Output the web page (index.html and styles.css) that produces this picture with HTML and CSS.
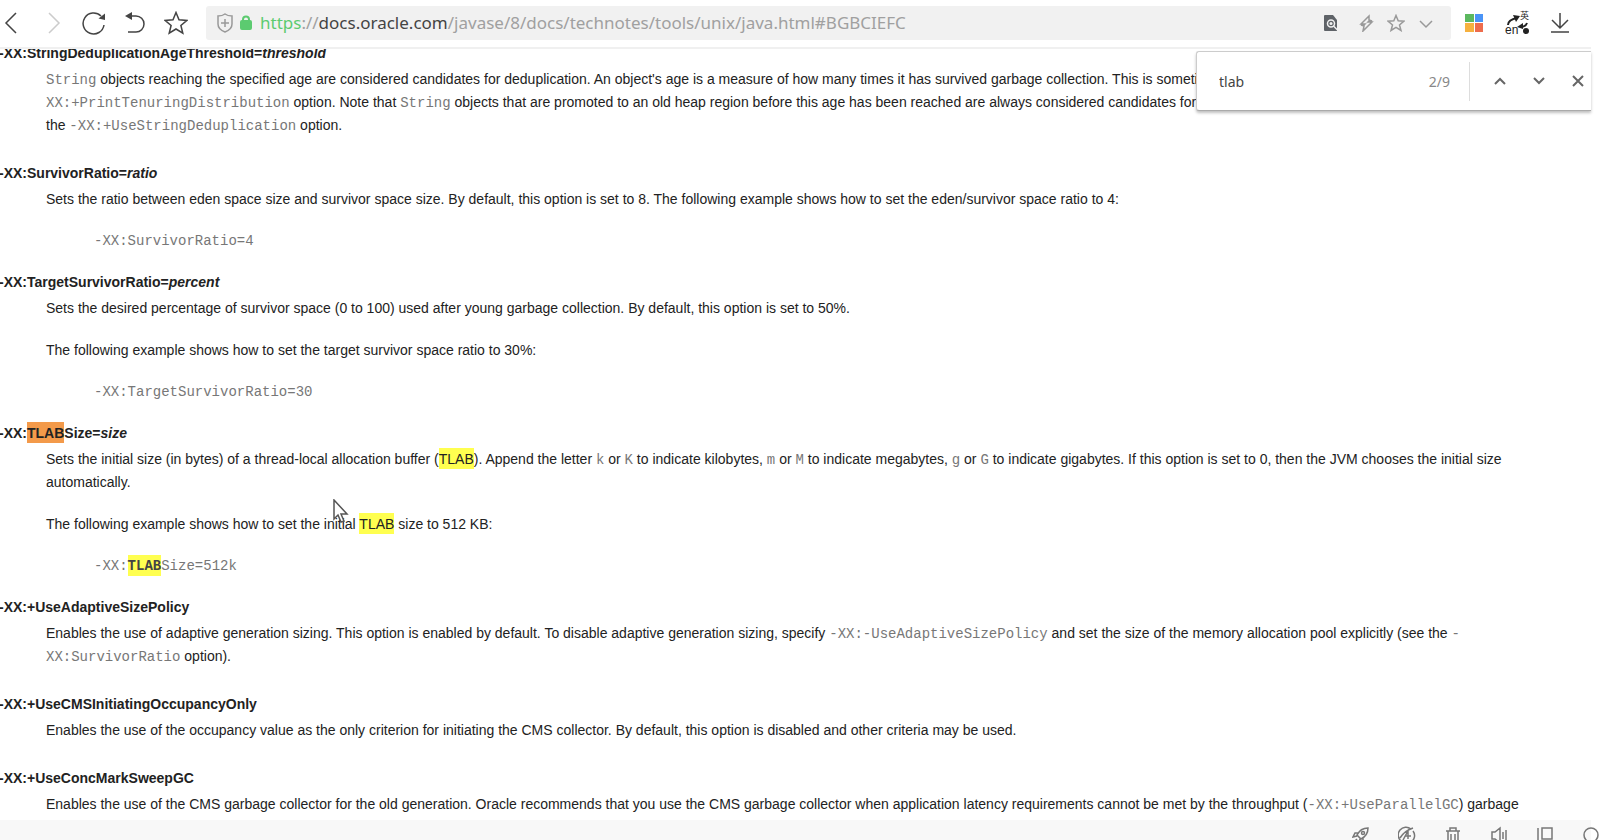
FILE: index.html
```html
<!DOCTYPE html>
<html lang="en">
<head>
    <meta charset="UTF-8">
    <meta name="viewport" content="width=device-width, initial-scale=1.0">
    <title>java</title>
    <link rel="stylesheet" href="styles.css">
</head>
<body>
    <header class="toolbar">
        <nav class="nav-buttons">
            <button type="button" aria-label="Back">
                <svg width="24" height="24" viewBox="0 0 24 24"><path d="M16 2 6 12l10 10"/></svg>
            </button>
            <button type="button" aria-label="Forward" class="faded">
                <svg width="24" height="24" viewBox="0 0 24 24"><path d="m8 2 10 10L8 22"/></svg>
            </button>
            <button type="button" aria-label="Reload">
                <svg width="24" height="24" viewBox="0 0 24 24"><path d="M22 14A10.500 10.500 0 1 1 19 5"/><path class="solid" d="m16.500 7.500 6.500-5V9z"/></svg>
            </button>
            <button type="button" aria-label="Undo close tab">
                <svg width="24" height="24" viewBox="0 0 24 24"><path d="M5 5h8a8 8 0 0 1 0 16H5"/><path class="solid" d="M2 5 9 1v8z"/></svg>
            </button>
            <button type="button" aria-label="Favorites">
                <svg width="24" height="24" viewBox="0 0 24 24"><path d="m12 1.500 3 7.300 8 .6-6.100 5.100 1.900 7.700-6.800-4.200-6.800 4.200 1.900-7.700L1 9.400l8-.6z"/></svg>
            </button>
        </nav>
        <div class="address-bar">
            <svg class="shield" width="16" height="20" viewBox="0 0 16 20"><path d="M8 1c2 1.500 4.500 2 7 2v8c0 4-3 6.500-7 8-4-1.500-7-4-7-8V3c2.500 0 5-.5 7-2zM8 6v8M4 10h8"/></svg>
            <svg class="lock" width="12" height="16" viewBox="0 0 12 16"><rect x="1" y="6" width="10" height="8" rx="1"/><path d="M3 7V4.500a3 3 0 0 1 6 0V7"/></svg>
            <a class="url" href="#BGBCIEFC"><span class="scheme">https</span>://<span class="host">docs.oracle.com</span>/javase/8/docs/technotes/tools/unix/java.html#BGBCIEFC</a>
            <div class="address-tools">
                <button type="button" aria-label="Find in page">
                    <svg width="18" height="18" viewBox="0 0 18 18"><path class="page-fill" d="M4 1h8l4 5v11H4a1 1 0 0 1-1-1V2a1 1 0 0 1 1-1z"/><circle cx="10" cy="9.500" r="3.500" class="lens"/><path class="lens" d="m12.500 12 4 4"/><circle cx="10" cy="9.500" r="1.500" class="lens-dot"/></svg>
                </button>
                <button type="button" aria-label="Speed mode">
                    <svg width="18" height="18" viewBox="0 0 18 18"><path d="M12 2 4 10h4l-1 1H4l3 1-1 5 9-9h-4l1-1h3l-3-1z"/></svg>
                </button>
                <button type="button" aria-label="Add bookmark">
                    <svg width="18" height="18" viewBox="0 0 18 18"><path d="m9 1.500 2.200 5.300 5.800.4-4.500 3.700 1.500 5.600L9 13.400l-5 3.100 1.500-5.600L1 7.200l5.800-.4z"/></svg>
                </button>
                <button type="button" aria-label="More">
                    <svg width="18" height="18" viewBox="0 0 18 18"><path d="m3 7 6 6 6-6"/></svg>
                </button>
            </div>
        </div>
        <div class="extensions">
            <button type="button" aria-label="Apps">
                <svg width="24" height="24" viewBox="0 0 24 24"><g stroke="none"><path fill="#5cb85f" d="M3 3h9v8H3z"/><path fill="#4a94f7" d="M13 3h8v8h-8z"/><path fill="#f6b13f" d="M3 12h9v9H3z"/><path fill="#ee6c4d" d="M13 12h8v9h-8z"/></g></svg>
            </button>
            <button type="button" aria-label="Translate" class="translate">
                <span class="zh">英</span>
                <span class="en">en</span>
                <svg width="24" height="24" viewBox="0 0 24 24"><path class="thick" d="M3 14c0-4 4-6 9-7M22 12c-1 3-4 4-7 4"/><path class="solid" d="m8 4 7 1-4 6zM18 12v6l-6-2z"/><circle class="solid" cx="21" cy="20" r="3"/></svg>
            </button>
            <button type="button" aria-label="Downloads">
                <svg width="24" height="24" viewBox="0 0 24 24"><path d="M12 2v15M4 9l8 8 8-8M3 21h18"/></svg>
            </button>
        </div>
    </header>

    <form class="find-bar" role="search">
        <input type="text" value="tlab" aria-label="Find in page">
        <span class="count">2/9</span>
        <span class="divider"></span>
        <button type="button" aria-label="Previous">
            <svg width="18" height="18" viewBox="0 0 18 18"><path d="m4 12 5-5 5 5"/></svg>
        </button>
        <button type="button" aria-label="Next">
            <svg width="18" height="18" viewBox="0 0 18 18"><path d="m4 6 5 5 5-5"/></svg>
        </button>
        <button type="button" aria-label="Close">
            <svg width="18" height="18" viewBox="0 0 18 18"><path d="m4 4 10 10M14 4 4 14"/></svg>
        </button>
    </form>

    <main class="page">
        <dl class="options">
            <dt>-XX:StringDeduplicationAgeThreshold=<em>threshold</em></dt>
            <dd>
                <p><code>String</code> objects reaching the specified age are considered candidates for deduplication. An object's age is a measure of how many times it has survived garbage collection. This is sometimes referred to as tenuring; see the <code>-<br>XX:+PrintTenuringDistribution</code> option. Note that <code>String</code> objects that are promoted to an old heap region before this age has been reached are always considered candidates for deduplication. The default value is 3. See<br>the <code>-XX:+UseStringDeduplication</code> option.</p>
            </dd>

            <dt>-XX:SurvivorRatio=<em>ratio</em></dt>
            <dd>
                <p>Sets the ratio between eden space size and survivor space size. By default, this option is set to 8. The following example shows how to set the eden/survivor space ratio to 4:</p>
                <pre>-XX:SurvivorRatio=4</pre>
            </dd>

            <dt>-XX:TargetSurvivorRatio=<em>percent</em></dt>
            <dd>
                <p>Sets the desired percentage of survivor space (0 to 100) used after young garbage collection. By default, this option is set to 50%.</p>
                <p>The following example shows how to set the target survivor space ratio to 30%:</p>
                <pre>-XX:TargetSurvivorRatio=30</pre>
            </dd>

            <dt>-XX:<mark class="current">TLAB</mark>Size=<em>size</em></dt>
            <dd>
                <p>Sets the initial size (in bytes) of a thread-local allocation buffer (<mark>TLAB</mark>). Append the letter <code>k</code> or <code>K</code> to indicate kilobytes, <code>m</code> or <code>M</code> to indicate megabytes, <code>g</code> or <code>G</code> to indicate gigabytes. If this option is set to 0, then the JVM chooses the initial size<br>automatically.</p>
                <p>The following example shows how to set the initial <mark>TLAB</mark> size to 512 KB:</p>
                <pre>-XX:<mark>TLAB</mark>Size=512k</pre>
            </dd>

            <dt>-XX:+UseAdaptiveSizePolicy</dt>
            <dd>
                <p>Enables the use of adaptive generation sizing. This option is enabled by default. To disable adaptive generation sizing, specify <code>-XX:-UseAdaptiveSizePolicy</code> and set the size of the memory allocation pool explicitly (see the <code>-<br>XX:SurvivorRatio</code> option).</p>
            </dd>

            <dt>-XX:+UseCMSInitiatingOccupancyOnly</dt>
            <dd>
                <p>Enables the use of the occupancy value as the only criterion for initiating the CMS collector. By default, this option is disabled and other criteria may be used.</p>
            </dd>

            <dt>-XX:+UseConcMarkSweepGC</dt>
            <dd>
                <p>Enables the use of the CMS garbage collector for the old generation. Oracle recommends that you use the CMS garbage collector when application latency requirements cannot be met by the throughput (<code>-XX:+UseParallelGC</code>) garbage</p>
            </dd>
        </dl>
        <svg class="cursor" width="16" height="25" viewBox="0 0 16 25"><path d="M1 1v19l4-4 3 7 3-1-3-7h6z"/></svg>
    </main>

    <footer class="status-bar">
        <button type="button" aria-label="Boost">
            <svg width="18" height="18" viewBox="0 0 18 18"><path d="M5 9c2-4 6-7 11-7 0 5-3 9-7 11zM6 7H3l-2 4 4-1M11 12v3l-4 2 1-4M5 13l-3 3"/><circle cx="11" cy="7" r="1.500"/></svg>
        </button>
        <button type="button" aria-label="Accelerator">
            <svg width="18" height="18" viewBox="0 0 18 18"><path d="M3 15A7.500 7.500 0 0 1 13 3M15 5a7.500 7.500 0 0 1-2 11M2 12C5 7 9 4 15 2M5 14l5-9v8M7 10h6"/></svg>
        </button>
        <button type="button" aria-label="Clear">
            <svg width="18" height="18" viewBox="0 0 18 18"><path d="M2 5h14M6 5V2h6v3M4 5v12h10V5M7 8v6M11 8v6"/></svg>
        </button>
        <button type="button" aria-label="Sound">
            <svg width="18" height="18" viewBox="0 0 18 18"><path d="M2 6h3l5-4v15l-5-4H2zM13 6v7M16 4v11"/></svg>
        </button>
        <button type="button" aria-label="Side window">
            <svg width="18" height="18" viewBox="0 0 18 18"><path d="M2 2v14M6 2h10v11H6z"/></svg>
        </button>
        <button type="button" aria-label="Zoom">
            <svg width="18" height="18" viewBox="0 0 18 18"><circle cx="9" cy="9" r="7"/></svg>
        </button>
    </footer>
</body>
</html>
```
FILE: styles.css
```css
* {
    box-sizing: border-box;
}
body {
    margin: 0;
    padding-right: 17px;
    height: 100vh;
    display: flex;
    flex-direction: column;
    position: relative;
    overflow: hidden;
    background: #fff;
    color: #222;
    font-family: "Liberation Sans", Arial, sans-serif;
    font-size: 14px;
    line-height: 23px;
}
button {
    display: block;
    padding: 0;
    border: 0;
    background: none;
    color: inherit;
    flex: none;
}
svg {
    display: block;
    fill: none;
    stroke: currentColor;
    stroke-width: 1.5;
}
.solid {
    fill: currentColor;
    stroke: none;
}

/* Toolbar */
.toolbar {
    display: flex;
    align-items: center;
    height: 49px;
    padding-bottom: 2px;
    border-bottom: 2px solid #f0f0f0;
    flex: none;
    color: #444;
}
.nav-buttons {
    display: flex;
    gap: 17px;
    padding-right: 18px;
}
.faded {
    color: #ccc;
}
.address-bar {
    flex: 1;
    display: flex;
    align-items: center;
    height: 34px;
    padding: 0 16px 0 11px;
    border-radius: 3px;
    background: #f1f1f1;
    color: #999;
}
.lock {
    margin: 0 8px 0 7px;
    fill: #5ccb70;
    stroke: #5ccb70;
    stroke-width: 2;
}
.lock path {
    fill: none;
}
.url {
    flex: 1;
    font-family: "Noto Sans", "Open Sans", sans-serif;
    font-size: 17px;
    color: #a0a0a0;
    text-decoration: none;
    white-space: nowrap;
}
.scheme {
    color: #5ccb70;
}
.host {
    color: #444;
}
.address-tools {
    display: flex;
    gap: 12px;
}
.address-tools button:first-child {
    margin-right: 6px;
}
.page-fill {
    fill: #5f6368;
    stroke: none;
}
.lens {
    stroke: #f1f1f1;
}
.lens-dot {
    fill: #f1f1f1;
    stroke: none;
}
.extensions {
    display: flex;
    gap: 19px;
    padding: 0 19px 0 11px;
}
.translate {
    position: relative;
    color: #222;
}
.translate span {
    position: absolute;
    line-height: 10px;
}
.zh {
    top: 0;
    right: 0;
    font-family: "Noto Sans CJK SC", sans-serif;
    font-size: 9px;
}
.en {
    bottom: 0;
    left: 0;
    font-size: 12px;
}
.thick {
    stroke-width: 2;
}

/* Find bar */
.find-bar {
    position: absolute;
    top: 51px;
    right: 17px;
    width: 395px;
    height: 60px;
    display: flex;
    align-items: center;
    padding: 0 4px 0 22px;
    border: 1px solid #ccc;
    border-right: 0;
    border-bottom-color: #aaa;
    border-radius: 3px 0 0 3px;
    background: #fff;
    box-shadow: 0 2px 3px rgba(0,0,0,0.25);
    color: #666;
    z-index: 1;
}
.find-bar input {
    flex: 1;
    min-width: 0;
    padding: 0;
    border: 0;
    outline: none;
    color: #444;
    font-family: "Noto Sans", sans-serif;
    font-size: 14px;
}
.find-bar svg {
    stroke-width: 2;
}
.find-bar button {
    margin-left: 21px;
}
.count {
    font-family: "Noto Sans", sans-serif;
    color: #888;
}
.divider {
    width: 1px;
    height: 39px;
    margin-left: 19px;
    background: #ddd;
}

/* Document */
.page {
    flex: 1;
    min-height: 0;
    position: relative;
    overflow: hidden;
}
.options {
    margin: -7px 0 0;
}
dt {
    margin-left: -1px;
    margin-bottom: 3px;
    font-weight: bold;
}
dd {
    margin: 0 0 0 46px;
    white-space: nowrap;
}
p {
    margin: 0;
}
p + p {
    margin-top: 19px;
}
p:last-child {
    margin-bottom: 25px;
}
code,
pre {
    font-family: "Liberation Mono", "Courier New", monospace;
    font-size: 14px;
    line-height: 1;
    color: #777;
}
pre {
    margin: 19px 0 18px 48px;
    line-height: 23px;
}
mark {
    padding: 3px 0 2px;
    background: #ffff50;
    color: #222;
}
.current {
    background: #f39a4a;
}
pre mark {
    color: #444;
    font-weight: bold;
}
.cursor {
    position: absolute;
    top: 450px;
    left: 333px;
    fill: #fff;
    stroke: #555;
}

/* Status bar */
.status-bar {
    display: flex;
    justify-content: flex-end;
    align-items: flex-start;
    gap: 28px;
    height: 20px;
    margin-right: -9px;
    padding-top: 6px;
    overflow: hidden;
    flex: none;
    background: linear-gradient(#f8f8f8, #f8f8f8) no-repeat;
    background-size: calc(100% - 9px) 100%;
    color: #777;
}
```
